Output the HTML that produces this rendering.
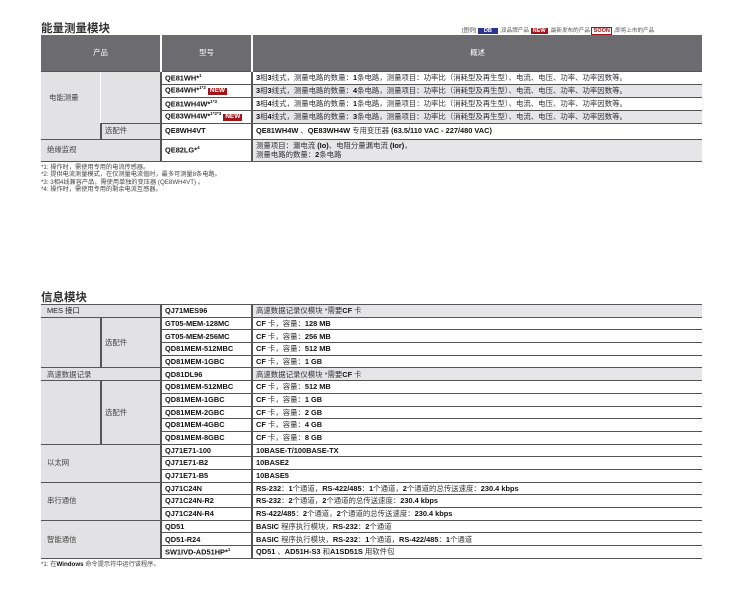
<!DOCTYPE html>
<html><head><meta charset="utf-8"><style>
*{margin:0;padding:0;box-sizing:border-box}
body{width:754px;height:599px;background:#fff;font-family:"Liberation Sans","Noto Sans CJK SC",sans-serif;color:#222;position:relative;overflow:hidden}
.t{position:absolute;font-size:11.5px;font-weight:bold;color:#333}
table{position:absolute;left:41px;border-collapse:collapse;table-layout:fixed;font-size:7.4px}
td{border-top:1.5px solid #555;border-bottom:1.5px solid #555;padding:0 3px;white-space:nowrap;overflow:hidden;line-height:1}
td.g{background:#e2e2e4;color:#444}
td.m{background:#fff;font-weight:bold;border-left:2px solid #555;border-right:2px solid #555;color:#111}
td.d{color:#333}
td.dg{background:#e6e6e8;color:#333}
td.sub{border-left:2px solid #555;background:#e2e2e4;color:#444}
th{background:#6b6b70;color:#fff;font-weight:normal;font-size:7.4px;border-left:2px solid #fff}
.new{display:inline-block;background:#a0141a;color:#fff;font-weight:bold;font-size:6.5px;padding:0 2px;margin-left:2px}
sup{font-size:4.5px}
.note{position:absolute;left:41px;font-size:6.2px;color:#444;line-height:7.3px}
b{color:#111}
</style></head><body>
<div class="t" style="left:41px;top:20px">能量测量模块</div>
<div style="position:absolute;left:462px;top:26px;font-size:5.6px;color:#555;white-space:nowrap">[图例] <span style="background:#2a3590;color:#fff;font-weight:bold;padding:0 6px">DB</span> ,双品牌产品 <span style="background:#a0141a;color:#fff;font-weight:bold;padding:0 2px">NEW</span> ,最新发布的产品 <span style="border:1px solid #a0141a;color:#a0141a;font-weight:bold;padding:0 1px">SOON</span> ,即将上市的产品</div>
<table style="top:35px;width:661px">
<col style="width:60px"><col style="width:60px"><col style="width:91px"><col style="width:450px">
<tr style="height:36px"><th colspan="2" style="border-left:0">产品</th><th>型号</th><th>概述</th></tr>
<tr style="height:13px"><td class="g" rowspan="5" style="padding-left:8px;vertical-align:top;padding-top:22px">电能测量</td><td class="g" rowspan="4"></td><td class="m">QE81WH*<sup>1</sup></td><td class="d"><b>3</b>相<b>3</b>线式，测量电路的数量：<b>1</b>条电路，测量项目：功率比（消耗型及再生型）、电流、电压、功率、功率因数等。</td></tr>
<tr style="height:13px"><td class="m">QE84WH*<sup>1*2</sup><span class="new">NEW</span></td><td class="dg"><b>3</b>相<b>3</b>线式，测量电路的数量：<b>4</b>条电路，测量项目：功率比（消耗型及再生型）、电流、电压、功率、功率因数等。</td></tr>
<tr style="height:13px"><td class="m">QE81WH4W*<sup>1*3</sup></td><td class="d"><b>3</b>相<b>4</b>线式，测量电路的数量：<b>1</b>条电路，测量项目：功率比（消耗型及再生型）、电流、电压、功率、功率因数等。</td></tr>
<tr style="height:13px"><td class="m">QE83WH4W*<sup>1*2*3</sup><span class="new">NEW</span></td><td class="dg"><b>3</b>相<b>4</b>线式，测量电路的数量：<b>3</b>条电路，测量项目：功率比（消耗型及再生型）、电流、电压、功率、功率因数等。</td></tr>
<tr style="height:16px"><td class="sub">选配件</td><td class="m">QE8WH4VT</td><td class="d"><b>QE81WH4W</b> 、<b>QE83WH4W</b> 专用变压器 <b>(63.5/110 VAC - 227/480 VAC)</b></td></tr>
<tr style="height:22px"><td class="g" colspan="2" style="padding-left:6px">绝缘监视</td><td class="m">QE82LG*<sup>4</sup></td><td class="dg" style="line-height:9px">测量项目：漏电流 <b>(Io)</b>、电阻分量漏电流 <b>(Ior)</b>，<br>测量电路的数量：<b>2</b>条电路</td></tr>
</table>
<div class="note" style="top:164px">*1: 操作时，需使用专用的电流传感器。<br>*2: 提供电流测量模式，在仅测量电流值时，最多可测量8条电路。<br>*3: 3相4线兼容产品，需使用单独的变压器 (QE8WH4VT) 。<br>*4: 操作时，需使用专用的剩余电流互感器。</div>

<div class="t" style="left:41px;top:289px">信息模块</div>
<table style="top:304px;width:661px">
<col style="width:60px"><col style="width:60px"><col style="width:91px"><col style="width:450px">
<tr style="height:12.7px"><td class="g" colspan="2" style="padding-left:6px;color:#222">MES 接口</td><td class="m">QJ71MES96</td><td class="dg">高速数据记录仪模块 *需要<b>CF</b> 卡</td></tr>
<tr style="height:12.7px"><td class="g" rowspan="4"></td><td class="sub" rowspan="4">选配件</td><td class="m">GT05-MEM-128MC</td><td class="d"><b>CF</b> 卡，容量：<b>128 MB</b></td></tr>
<tr style="height:12.7px"><td class="m">GT05-MEM-256MC</td><td class="d"><b>CF</b> 卡，容量：<b>256 MB</b></td></tr>
<tr style="height:12.7px"><td class="m">QD81MEM-512MBC</td><td class="d"><b>CF</b> 卡，容量：<b>512 MB</b></td></tr>
<tr style="height:12.7px"><td class="m">QD81MEM-1GBC</td><td class="d"><b>CF</b> 卡，容量：<b>1 GB</b></td></tr>
<tr style="height:12.7px"><td class="g" colspan="2" style="padding-left:6px">高速数据记录</td><td class="m">QD81DL96</td><td class="dg">高速数据记录仪模块 *需要<b>CF</b> 卡</td></tr>
<tr style="height:12.7px"><td class="g" rowspan="5"></td><td class="sub" rowspan="5">选配件</td><td class="m">QD81MEM-512MBC</td><td class="d"><b>CF</b> 卡，容量：<b>512 MB</b></td></tr>
<tr style="height:12.7px"><td class="m">QD81MEM-1GBC</td><td class="d"><b>CF</b> 卡，容量：<b>1 GB</b></td></tr>
<tr style="height:12.7px"><td class="m">QD81MEM-2GBC</td><td class="d"><b>CF</b> 卡，容量：<b>2 GB</b></td></tr>
<tr style="height:12.7px"><td class="m">QD81MEM-4GBC</td><td class="d"><b>CF</b> 卡，容量：<b>4 GB</b></td></tr>
<tr style="height:12.7px"><td class="m">QD81MEM-8GBC</td><td class="d"><b>CF</b> 卡，容量：<b>8 GB</b></td></tr>
<tr style="height:12.7px"><td class="g" colspan="2" rowspan="3" style="padding-left:6px">以太网</td><td class="m">QJ71E71-100</td><td class="d"><b>10BASE-T/100BASE-TX</b></td></tr>
<tr style="height:12.7px"><td class="m">QJ71E71-B2</td><td class="d"><b>10BASE2</b></td></tr>
<tr style="height:12.7px"><td class="m">QJ71E71-B5</td><td class="d"><b>10BASE5</b></td></tr>
<tr style="height:12.7px"><td class="g" colspan="2" rowspan="3" style="padding-left:6px">串行通信</td><td class="m">QJ71C24N</td><td class="d"><b>RS-232</b>：<b>1</b>个通道，<b>RS-422/485</b>：<b>1</b>个通道，<b>2</b>个通道的总传送速度：<b>230.4 kbps</b></td></tr>
<tr style="height:12.7px"><td class="m">QJ71C24N-R2</td><td class="d"><b>RS-232</b>：<b>2</b>个通道，<b>2</b>个通道的总传送速度：<b>230.4 kbps</b></td></tr>
<tr style="height:12.7px"><td class="m">QJ71C24N-R4</td><td class="d"><b>RS-422/485</b>：<b>2</b>个通道，<b>2</b>个通道的总传送速度：<b>230.4 kbps</b></td></tr>
<tr style="height:12.7px"><td class="g" colspan="2" rowspan="3" style="padding-left:6px">智能通信</td><td class="m">QD51</td><td class="d"><b>BASIC</b> 程序执行模块，<b>RS-232</b>：<b>2</b>个通道</td></tr>
<tr style="height:12.7px"><td class="m">QD51-R24</td><td class="d"><b>BASIC</b> 程序执行模块，<b>RS-232</b>：<b>1</b>个通道，<b>RS-422/485</b>：<b>1</b>个通道</td></tr>
<tr style="height:12.7px"><td class="m">SW1IVD-AD51HP*<sup>1</sup></td><td class="d"><b>QD51</b> 、<b>AD51H-S3</b> 和<b>A1SD51S</b> 用软件包</td></tr>
</table>
<div class="note" style="top:561px">*1: 在<b>Windows</b> 命令提示符中运行该程序。</div>
</body></html>
